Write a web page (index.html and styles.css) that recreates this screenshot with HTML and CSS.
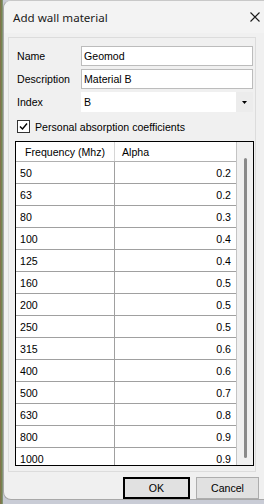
FILE: index.html
```html
<!DOCTYPE html>
<html>
<head>
<meta charset="utf-8">
<link rel="stylesheet" href="styles.css">
</head>
<body>
<div class="window">
  <div class="titlebar">
    <span class="title">Add wall material</span>
    <svg class="close" width="10" height="10" viewBox="0 0 10 10"><path d="M0.5 0.5 L9.5 9.5 M9.5 0.5 L0.5 9.5" stroke="#1b1b1b" stroke-width="1.1" fill="none"/></svg>
  </div>
  <div class="panel">
    <div class="form">
      <span class="lbl">Name</span><div class="textbox">Geomod</div>
      <span class="lbl">Description</span><div class="textbox">Material B</div>
      <span class="lbl">Index</span>
      <div class="combo"><span class="val">B</span><span class="dd"><svg width="5" height="3" viewBox="0 0 5 3"><path d="M0 0 H5 L2.5 3 Z" fill="#000"/></svg></span></div>
    </div>
    <div class="check">
      <span class="box"><svg width="11" height="11" viewBox="0 0 11 11"><path d="M2 5.5 L4.5 8 L9 2.5" stroke="#000" stroke-width="1.4" fill="none"/></svg></span>
      <span>Personal absorption coefficients</span>
    </div>
    <div class="grid">
      <div class="table">
        <div class="row head"><div class="c1">Frequency (Mhz)</div><div class="c2">Alpha</div></div>
        <div class="row"><div class="c1">50</div><div class="c2">0.2</div></div>
        <div class="row"><div class="c1">63</div><div class="c2">0.2</div></div>
        <div class="row"><div class="c1">80</div><div class="c2">0.3</div></div>
        <div class="row"><div class="c1">100</div><div class="c2">0.4</div></div>
        <div class="row"><div class="c1">125</div><div class="c2">0.4</div></div>
        <div class="row"><div class="c1">160</div><div class="c2">0.5</div></div>
        <div class="row"><div class="c1">200</div><div class="c2">0.5</div></div>
        <div class="row"><div class="c1">250</div><div class="c2">0.5</div></div>
        <div class="row"><div class="c1">315</div><div class="c2">0.6</div></div>
        <div class="row"><div class="c1">400</div><div class="c2">0.6</div></div>
        <div class="row"><div class="c1">500</div><div class="c2">0.7</div></div>
        <div class="row"><div class="c1">630</div><div class="c2">0.8</div></div>
        <div class="row"><div class="c1">800</div><div class="c2">0.9</div></div>
        <div class="row"><div class="c1">1000</div><div class="c2">0.9</div></div>
      </div>
      <div class="scroll"><div class="thumb"></div></div>
    </div>
  </div>
  <div class="buttons">
    <div class="btn ok">OK</div>
    <div class="btn cancel">Cancel</div>
  </div>
</div>
</body>
</html>
```

FILE: styles.css
```css
html, body {
  margin: 0;
  padding: 0;
}
body {
  width: 264px;
  height: 504px;
  overflow: hidden;
  background: linear-gradient(90deg, #8a6a4a 0, #6f8a4f 2px, #9a9a9a 3px, #c9ccd6 3px);
  font-family: "Liberation Sans", Arial, sans-serif;
  font-size: 10.6px;
  color: #000;
}
.window {
  margin-left: 3px;
  width: 265px;
  height: 500px;
  box-sizing: border-box;
  border-left: 1px solid #a8a8a8;
  border-top: 1px solid #c8c8c8;
  border-bottom: 1px solid #a8a8a8;
  border-radius: 8px 0 0 8px;
  background: #f0f0f0;
  display: flex;
  flex-direction: column;
  overflow: hidden;
}
.titlebar {
  height: 32px;
  display: flex;
  align-items: center;
  justify-content: space-between;
  padding-left: 9px;
  padding-right: 8px;
  background: #f3f3f3;
  flex: none;
}
.title {
  font-family: "Noto Sans", sans-serif;
  font-size: 11.6px;
  color: #1a1a1a;
}
.panel {
  margin: 4px 0 0 4px;
  width: 248px;
  height: 435px;
  box-sizing: border-box;
  border: 1px solid #dcdcdc;
  padding: 8px 2px 0 6px;
  display: flex;
  flex-direction: column;
  flex: none;
}
.form {
  display: grid;
  grid-template-columns: 66px 172px;
  row-gap: 3px;
  align-items: center;
}
.lbl {
  padding-left: 2px;
}
.textbox {
  height: 20px;
  box-sizing: border-box;
  border: 1px solid #bcbcbc;
  background: #fff;
  padding-left: 2px;
  display: flex;
  align-items: center;
}
.combo {
  height: 20px;
  box-sizing: border-box;
  background: #fff;
  display: flex;
  align-items: center;
  justify-content: space-between;
  padding-left: 3px;
}
.dd {
  width: 17px;
  height: 20px;
  background: #ececec;
  display: flex;
  align-items: center;
  justify-content: center;
}
.check {
  margin-top: 8px;
  height: 13px;
  display: flex;
  align-items: center;
  gap: 5px;
  padding-left: 2px;
}
.box {
  width: 13px;
  height: 13px;
  box-sizing: border-box;
  border: 1px solid #333;
  background: #fff;
  display: flex;
  align-items: center;
  justify-content: center;
}
.grid {
  margin-top: 8px;
  width: 239px;
  height: 325px;
  box-sizing: border-box;
  border: 1px solid #000;
  display: flex;
  overflow: hidden;
  background: #fff;
}
.table {
  width: 220px;
  border-right: 1px solid #c4c4c4;
  flex: none;
}
.row {
  display: flex;
  height: 22px;
  box-sizing: border-box;
  border-bottom: 1px solid #a0a0a0;
}
.row.head {
  height: 20px;
  border-bottom: 1px solid #b0b0b0;
}
.c1 {
  width: 99px;
  box-sizing: border-box;
  border-right: 1px solid #a0a0a0;
  padding-left: 4px;
  display: flex;
  align-items: center;
  flex: none;
}
.c2 {
  flex: 1;
  display: flex;
  align-items: center;
  justify-content: flex-end;
  padding-right: 5px;
}
.head .c1 {
  padding-left: 9px;
  border-right: 1px solid #d6d6d6;
}
.head .c2 {
  justify-content: flex-start;
  padding-left: 7px;
}
.scroll {
  flex: 1;
  background: #f0f0f0;
  display: flex;
  justify-content: center;
  padding-top: 16px;
}
.thumb {
  width: 3px;
  height: 300px;
  background: #8a8a8a;
  border-radius: 2px;
}
.buttons {
  display: flex;
  gap: 6px;
  margin-top: 5px;
  padding-left: 119px;
}
.btn {
  height: 22px;
  box-sizing: border-box;
  background: #e1e1e1;
  border: 1px solid #adadad;
  display: flex;
  align-items: center;
  justify-content: center;
}
.ok {
  width: 67px;
  border: 2px solid #000;
}
.cancel {
  width: 63px;
}
```
